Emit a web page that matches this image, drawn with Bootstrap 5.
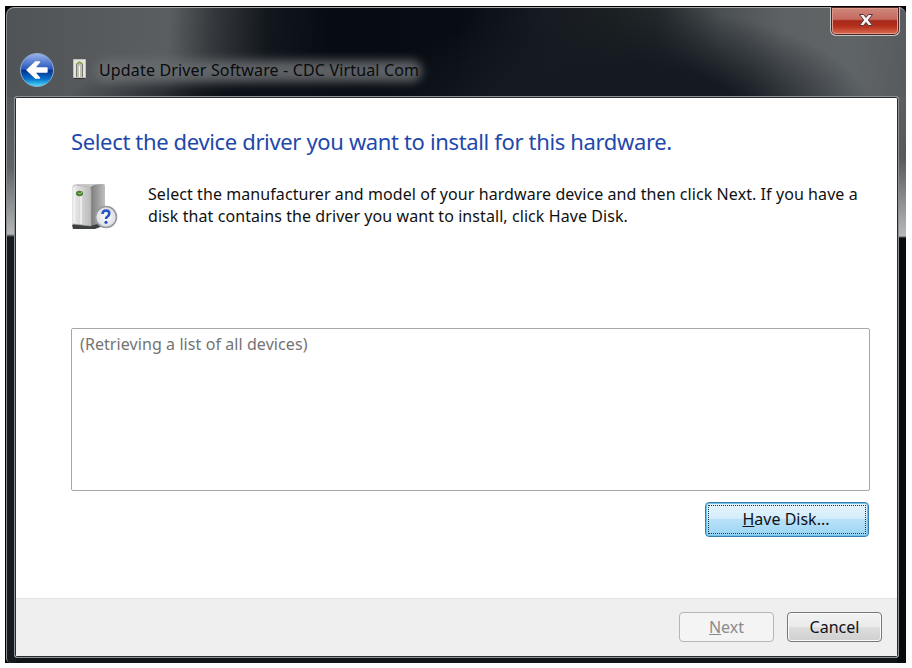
<!DOCTYPE html>
<html lang="en">
<head>
<meta charset="utf-8">
<meta name="viewport" content="width=device-width, initial-scale=1">
<title>Update Driver Software</title>
<link href="https://cdn.jsdelivr.net/npm/bootstrap@5.3.0/dist/css/bootstrap.min.css" rel="stylesheet">
<style>
body{height:668px;overflow:hidden;background:#fdfefd;font-family:"Noto Sans","Open Sans",sans-serif;color:#111;font-size:16px}
.stage{padding:6px 6px 5px 5px;height:668px}
.frame{background:#000;height:657px;padding:1px 0 0 1px}
.glass{height:656px;border-top:1px solid #a4a7a8;border-left:1px solid #8b8f93;border-radius:8px 8px 0 5px;padding:0 7px 5px 7px;
background:
linear-gradient(#55595c 0,#606366 70px,#b3b5b6 137px,#16191e 140px) 0 89px/9px 100% no-repeat,
linear-gradient(#5b5f62 0,#55595c 60px,#b6b8b9 139px,#080b0d 141px) 100% 89px/9px 100% no-repeat,
radial-gradient(ellipse 190px 45px at 250px 92px,#0c1117 20%,#0c111700) 0 0/100% 91px no-repeat,
radial-gradient(ellipse 260px 120px at 610px 115px,#141a20 50%,#141a2000) 0 0/100% 91px no-repeat,
linear-gradient(93deg,#515457 0,#585b5e 12%,#5a5e61 18%,#34383c 23%,#12171d 29%,#070b12 36%,#080c13 50%,#171b22 60%,#1c2122 67%,#24292d 72%,#4b5053 79%,#5d6164 86%,#5f6467 94%,#575b5e 100%) 0 0/100% 91px no-repeat,#101419}
.caption-bar{height:88px;position:relative}
.back{width:34px;height:36px;margin-left:6px;margin-top:44px}
.dev{width:13px;height:20px;margin-left:19px;margin-top:51px}
.title-text{font-size:16px;line-height:24px;letter-spacing:.16px;margin:50px 0 0 13px;color:#080b0e;white-space:nowrap;position:relative}
.title-text::before{content:"";position:absolute;z-index:0;inset:2px -3px 0 -4px;border-radius:12px;background:#6c6f72;filter:blur(5px);opacity:.85}
.title-text span{position:relative}
.close-btn{position:absolute;top:-1px;right:-1px;width:70px;height:29px;border:1px solid #c6c4c3;border-top:0;border-radius:0 0 6px 6px;background:linear-gradient(#cf8b80 0,#c6695d 44%,#a52a1c 49%,#b52f1c 68%,#df7455 100%);box-shadow:inset 0 0 0 1px #4b2524,inset 0 0 0 2px #e09a8b}
.close-btn svg{margin:6px 0 0 2px}
.client{height:562px;background:#fff;border:1px solid #8e9194;border-radius:3px;box-shadow:inset 0 0 0 1px #272b2e;padding:1px}
.page-area{height:500px;padding:29px 27px 0 55px}
h1{font-size:22px;line-height:28px;margin:0;color:#1e48ac;font-weight:400;letter-spacing:-.35px;white-space:nowrap}
.intro{margin-top:27px;height:120px}
.intro svg{width:50px;height:50px;margin:1px 28px 0 -1px;flex:none}
.intro p{line-height:21.5px;white-space:nowrap;margin:2px 0 0;letter-spacing:.075px}
.listing{height:163px;border:1px solid #a7a7a7;border-radius:2px;padding:3px 8px;color:#747474;line-height:24px;letter-spacing:.08px;margin-top:26px}
.btn{--bs-btn-font-size:16px;border-radius:4px;padding:0;line-height:30px;color:#101216;white-space:nowrap}
.disk{width:164px;height:35px;margin-top:11px;margin-right:1px;border:1px solid #397fae;background:linear-gradient(#e8f5fc 0,#d4edfb 46%,#b8e1f9 50%,#9bd5f3 100%);box-shadow:inset 0 0 0 1px #70c3ea;position:relative;padding:0 2px 1px 0}
.disk::after{content:"";position:absolute;inset:2px;border:1px dotted #18384a}
.foot{height:58px;background:#efefef;border-top:1px solid #e2e2e2;padding:13px 15px 0 0;gap:13px}
.foot .btn{width:95px;height:30px;line-height:28px}
.next{border:1px solid #b3b5b6;background:#f4f4f4;color:#8b8b8b}
.cancel{border:1px solid #777;background:linear-gradient(#f3f3f3 0,#ebebeb 48%,#dddddd 52%,#d0d0d0 100%);box-shadow:inset 0 0 0 1px #fafafa}
</style>
<script src="https://cdn.jsdelivr.net/npm/bootstrap@5.3.0/dist/js/bootstrap.bundle.min.js"></script>
</head>
<body>
<main class="stage"><div class="frame"><div class="glass">
<header class="caption-bar d-flex align-items-start">
<svg class="back" viewBox="0 0 34 36"><defs><linearGradient id="b" x2="0" y2="1"><stop stop-color="#9bb4ec"/><stop offset=".48" stop-color="#2555bc"/><stop offset=".5" stop-color="#062d88"/><stop offset=".78" stop-color="#0875ce"/><stop offset="1" stop-color="#52e2fa"/></linearGradient></defs><circle cx="17" cy="18" r="16.500" fill="url(#b)" stroke="#8da9ce"/><path d="M7 18 15.500 10h4l-5 6H27v4H14.500l5 6h-4z" fill="#fff" stroke="#fff" stroke-width="1.300" stroke-linejoin="round"/></svg>
<svg class="dev" viewBox="0 0 13 20"><path d="M.5.5h12v18H.5z" fill="#e5e6df" stroke="#bfc2bc"/><path d="M3.500 18V5q3-4 6 0v13" fill="#bfc1b6" stroke="#77796d"/><path d="M4 5q2.500-3 5 0" fill="none" stroke="#93a738" stroke-width="1.500"/><path d="M6.500 7v11" stroke="#f8f8f3"/><path d="M1 19.500h11" stroke="#333"/></svg>
<div class="title-text"><span>Update Driver Software - CDC Virtual Com</span></div>
<button class="close-btn p-0 d-flex justify-content-center" aria-label="Close"><svg width="16" height="14" viewBox="0 0 16 14"><path d="M1.500 1.500h4L8 4.500l2.500-3h4L10.300 7l4.200 5.500h-4L8 9.500l-2.500 3h-4L5.700 7z" fill="#f5f5f5" stroke="#54383a"/></svg></button>
</header>
<section class="client d-flex flex-column">
<div class="page-area d-flex flex-column">
<h1>Select the device driver you want to install for this hardware.</h1>
<div class="intro d-flex"><svg viewBox="0 0 50 50"><defs><linearGradient id="f"><stop stop-color="#ededed"/><stop offset="1" stop-color="#b9b9b9"/></linearGradient><linearGradient id="s"><stop stop-color="#777"/><stop offset="1" stop-color="#c0c0c0"/></linearGradient><radialGradient id="q"><stop stop-color="#fff"/><stop offset="1" stop-color="#d8dbdf"/></radialGradient></defs><path d="m2 42 7-4h27v4l-11 4H3z" fill="#3e4142"/><path d="M3 3 7 1h27l1 1-11 4z" fill="#c9c9c9"/><path d="M20 5Q22 1 34 1l1 2v36l-15 4z" fill="url(#s)"/><path d="M3 3q0-1 2-1l14 2q2 0 2 3v36L3 41z" fill="url(#f)" stroke="#aaa" stroke-width=".6"/><path d="M4 5v35M11 7v34" stroke="#fff"/><ellipse cx="9.500" cy="10.500" rx="3.500" ry="2.800" fill="#497e35"/><path d="m8 10 2 1 2-2" fill="none" stroke="#9bd47a"/><circle cx="36" cy="34" r="10.500" fill="url(#q)" stroke="#96999d" stroke-width="1.600"/><path d="M32.500 31q.2-3.500 3.500-3.500t3.300 3q0 1.700-1.800 3-1.500 1-1.500 2.500" fill="none" stroke="#2954c7" stroke-width="2.600"/><circle cx="36" cy="39.300" r="1.600" fill="#2954c7"/></svg>
<p>Select the manufacturer and model of your hardware device and then click Next. If you have a<br>disk that contains the driver you want to install, click Have Disk.</p></div>
<div class="listing">(Retrieving a list of all devices)</div>
<button class="btn disk align-self-end"><span><u>H</u>ave Disk...</span></button>
</div>
<footer class="foot d-flex justify-content-end"><button class="btn next"><u>N</u>ext</button><button class="btn cancel">Cancel</button></footer>
</section>
</div></div></main>
</body>
</html>
